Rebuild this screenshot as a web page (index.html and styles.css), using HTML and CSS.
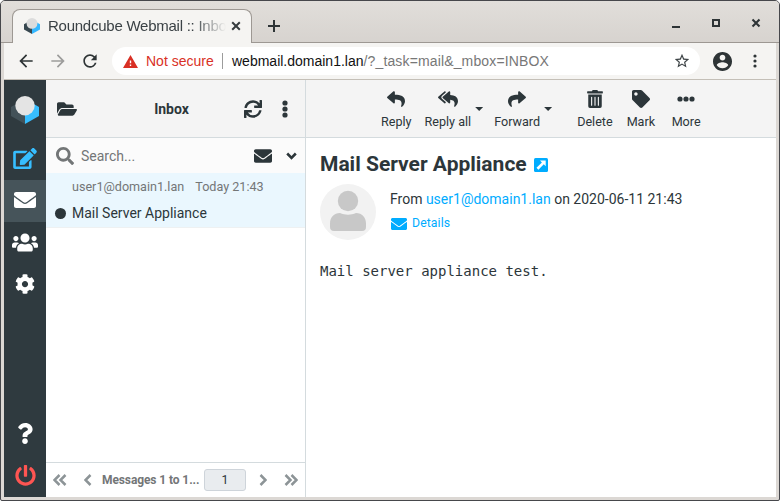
FILE: index.html
```html
<!DOCTYPE html>
<html lang="en">
<head>
<meta charset="utf-8">
<title>Roundcube Webmail :: Inbox</title>
<link rel="stylesheet" href="styles.css">
</head>
<body>
<div class="window">
  <header class="titlebar">
    <div class="tab">
      <svg class="favicon" viewBox="0 0 28 28"><path fill="#37474f" d="M0 11l6-3.500 8 4V28L0 20z"/><path fill="#34b7ff" d="M28 11l-6-3.500-8 4V28l14-8z"/><circle cx="14" cy="9.500" r="9.500" fill="#dcdcdc"/></svg>
      <span class="tab-title">Roundcube Webmail :: Inbo</span>
      <svg class="tab-close" viewBox="0 0 10 10"><path d="M1.200 1.200l7.600 7.600M8.800 1.200L1.200 8.800"/></svg>
    </div>
    <svg class="new-tab" viewBox="0 0 12 12"><path d="M6 0v12M0 6h12"/></svg>
    <div class="controls">
      <svg viewBox="0 0 10 10"><path d="M1 9h8" stroke-width="2"/></svg>
      <svg viewBox="0 0 10 10"><path d="M2 2h6v6H2z" stroke-width="2"/></svg>
      <svg viewBox="0 0 10 10"><path d="M1.500 1.500l7 7M8.500 1.500l-7 7" stroke-width="2.100"/></svg>
    </div>
  </header>

  <nav class="navbar">
    <svg class="nav-icon" viewBox="0 0 24 24"><path d="M20 11H7.830l5.590-5.590L12 4l-8 8 8 8 1.410-1.410L7.830 13H20v-2z"/></svg>
    <svg class="nav-icon disabled" viewBox="0 0 24 24"><path d="M4 11h12.170l-5.590-5.590L12 4l8 8-8 8-1.410-1.410L16.170 13H4v-2z"/></svg>
    <svg class="nav-icon" viewBox="0 0 24 24"><path d="M17.650 6.350A7.958 7.958 0 0 0 12 4c-4.420 0-7.990 3.580-7.990 8s3.570 8 7.990 8c3.730 0 6.840-2.550 7.730-6h-2.080A5.990 5.990 0 0 1 12 18c-3.310 0-6-2.690-6-6s2.690-6 6-6c1.660 0 3.140.69 4.220 1.780L13 11h7V4l-2.350 2.350z"/></svg>
    <div class="omnibox">
      <svg class="warning" viewBox="1 2 22 19"><path d="M1 21h22L12 2 1 21zm12-3h-2v-2h2v2zm0-4h-2v-4h2v4z"/></svg>
      <span class="insecure">Not secure</span>
      <span class="url">webmail.domain1.lan<span class="path">/?_task=mail&amp;_mbox=INBOX</span></span>
      <svg class="star" viewBox="1 1 22 22"><path d="M22 9.240l-7.190-.62L12 2 9.190 8.630 2 9.240l5.460 4.730L5.820 21 12 17.270 18.180 21l-1.630-7.030L22 9.240zM12 15.400l-3.760 2.270 1-4.280-3.320-2.880 4.380-.38L12 6.100l1.710 4.040 4.380.38-3.320 2.880 1 4.280L12 15.400z"/></svg>
    </div>
    <svg class="account" viewBox="2 2 20 20"><path d="M12 2C6.480 2 2 6.480 2 12s4.480 10 10 10 10-4.480 10-10S17.520 2 12 2zm0 3c1.660 0 3 1.340 3 3s-1.340 3-3 3-3-1.340-3-3 1.340-3 3-3zm0 14.200a7.200 7.200 0 0 1-6-3.220c.03-1.990 4-3.080 6-3.080 1.990 0 5.970 1.090 6 3.080a7.200 7.200 0 0 1-6 3.220z"/></svg>
    <svg class="menu" viewBox="0 0 4 14"><circle cx="2" cy="2" r="1.600"/><circle cx="2" cy="7" r="1.600"/><circle cx="2" cy="12" r="1.600"/></svg>
  </nav>

  <main class="app">
    <aside class="taskbar">
      <div class="task logo"><svg viewBox="0 0 28 28"><path fill="#435259" d="M0 11l6-3.500 8 4V28L0 20z"/><path fill="#37beff" d="M28 11l-6-3.500-8 4V28l14-8z"/><circle cx="14" cy="9.700" r="9.700" fill="#e4e4e4"/></svg></div>
      <div class="task compose"><svg viewBox="0 0 576 512"><path d="M402.600 83.200l90.200 90.200c3.800 3.800 3.800 10 0 13.800L274.400 405.600l-92.800 10.300c-12.400 1.400-22.900-9.100-21.500-21.500l10.300-92.800L388.800 83.200c3.800-3.800 10-3.800 13.800 0zm162-22.900l-48.800-48.800c-15.200-15.200-39.900-15.200-55.200 0l-35.400 35.400c-3.800 3.800-3.800 10 0 13.800l90.200 90.200c3.800 3.800 10 3.800 13.800 0l35.400-35.400c15.200-15.300 15.200-40 0-55.200zM384 346.200V448H64V128h229.800c3.200 0 6.200-1.300 8.500-3.500l40-40c7.600-7.600 2.200-20.500-8.500-20.500H48C21.500 64 0 85.500 0 112v352c0 26.500 21.500 48 48 48h352c26.500 0 48-21.500 48-48V306.200c0-10.700-12.900-16-20.500-8.500l-40 40c-2.200 2.300-3.500 5.300-3.500 8.500z"/></svg></div>
      <div class="task mail selected"><svg viewBox="0 64 512 384" preserveAspectRatio="none"><path d="M502.300 190.800c3.900-3.100 9.700-.2 9.700 4.700V400c0 26.500-21.500 48-48 48H48c-26.500 0-48-21.500-48-48V195.600c0-5 5.700-7.800 9.700-4.700 22.400 17.400 52.100 39.500 154.100 113.600 21.100 15.400 56.700 47.800 92.200 47.600 35.700.3 72-32.800 92.300-47.600 102-74.100 131.600-96.300 154-113.700zM256 320c23.200.4 56.600-29.200 73.400-41.400 132.700-96.300 142.800-104.700 173.400-128.700 5.800-4.500 9.200-11.500 9.200-18.900v-19c0-26.500-21.500-48-48-48H48c-26.500 0-48 21.500-48 48v19c0 7.400 3.400 14.300 9.200 18.900 30.600 23.900 40.700 32.400 173.400 128.700 16.800 12.200 50.200 41.800 73.400 41.400z"/></svg></div>
      <div class="task contacts"><svg viewBox="0 0 640 512"><path d="M96 224c35.300 0 64-28.700 64-64s-28.700-64-64-64-64 28.700-64 64 28.700 64 64 64zm448 0c35.300 0 64-28.700 64-64s-28.700-64-64-64-64 28.700-64 64 28.700 64 64 64zm32 32h-64c-17.600 0-33.500 7.100-45.100 18.600 40.300 22.100 68.900 62 75.100 109.400h66c17.700 0 32-14.300 32-32v-32c0-35.300-28.700-64-64-64zm-256 0c61.900 0 112-50.100 112-112S381.900 32 320 32 208 82.100 208 144s50.100 112 112 112zm76.800 32h-8.300c-20.800 10-43.900 16-68.500 16s-47.600-6-68.500-16h-8.300C179.600 288 128 339.600 128 403.200V432c0 26.500 21.500 48 48 48h288c26.500 0 48-21.500 48-48v-28.800c0-63.600-51.600-115.200-115.200-115.200zm-223.700-13.400C161.500 263.100 145.600 256 128 256H64c-35.300 0-64 28.700-64 64v32c0 17.700 14.300 32 32 32h65.900c6.300-47.400 34.900-87.300 75.200-109.400z"/></svg></div>
      <div class="task settings"><svg viewBox="0 0 512 512"><path d="M487.400 315.700l-42.600-24.600c4.300-23.200 4.300-47 0-70.200l42.600-24.600c4.900-2.800 7.100-8.600 5.500-14-11.100-35.600-30-67.800-54.700-94.600-3.800-4.100-10-5.100-14.800-2.300L380.800 110c-17.900-15.400-38.500-27.300-60.800-35.100V25.800c0-5.600-3.900-10.500-9.400-11.700-36.700-8.200-74.300-7.800-109.200 0-5.500 1.200-9.400 6.100-9.400 11.700V75c-22.200 7.900-42.800 19.800-60.800 35.100L88.700 85.500c-4.900-2.800-11-1.900-14.800 2.300-24.700 26.700-43.600 58.900-54.700 94.600-1.700 5.400.6 11.200 5.500 14L67.300 221c-4.300 23.200-4.300 47 0 70.200l-42.600 24.600c-4.900 2.800-7.100 8.600-5.500 14 11.100 35.600 30 67.800 54.700 94.600 3.800 4.100 10 5.100 14.800 2.300l42.600-24.600c17.900 15.400 38.500 27.300 60.800 35.100v49.200c0 5.600 3.900 10.500 9.400 11.700 36.700 8.200 74.300 7.800 109.200 0 5.500-1.200 9.400-6.100 9.400-11.700v-49.200c22.200-7.900 42.800-19.800 60.800-35.100l42.600 24.600c4.900 2.800 11 1.900 14.800-2.300 24.700-26.700 43.600-58.900 54.700-94.600 1.500-5.500-.7-11.300-5.600-14.100zM256 336c-44.100 0-80-35.900-80-80s35.900-80 80-80 80 35.900 80 80-35.900 80-80 80z"/></svg></div>
      <div class="task help"><svg viewBox="0 0 384 512"><path d="M202.021 0C122.202 0 70.503 32.703 29.914 91.026c-7.363 10.580-5.093 25.086 5.178 32.874l43.138 32.709c10.373 7.865 25.132 6.026 33.253-4.148 25.049-31.381 43.630-49.449 82.757-49.449 30.764 0 68.816 19.799 68.816 49.631 0 22.552-18.617 34.134-48.993 51.164-35.423 19.860-82.299 44.576-82.299 106.405V320c0 13.255 10.745 24 24 24h72.471c13.255 0 24-10.745 24-24v-5.773c0-42.860 125.268-44.645 125.268-160.627C377.504 66.256 286.902 0 202.021 0zM192 373.459c-38.196 0-69.271 31.075-69.271 69.271 0 38.195 31.075 69.270 69.271 69.270s69.271-31.075 69.271-69.271-31.075-69.270-69.271-69.270z"/></svg></div>
      <div class="task logout"><svg viewBox="0 0 512 512"><path d="M400 54.100c63 45 104 118.600 104 201.900 0 136.800-110.800 247.700-247.500 248C120 504.300 8.200 393 8 256.400 7.900 173.100 48.900 99.300 111.800 54.200c11.700-8.300 28-4.800 35 7.700L162.600 90c5.900 10.500 3.100 23.800-6.600 31-41.500 30.800-68 79.600-68 134.900-.1 92.300 74.500 168.100 168 168.100 91.600 0 168.600-74.200 168-169.100-.3-51.800-24.700-101.800-68.100-134-9.700-7.200-12.400-20.500-6.500-30.900l15.800-28.100c7-12.400 23.200-16.100 34.800-7.800zM296 264V24c0-13.300-10.700-24-24-24h-32c-13.300 0-24 10.700-24 24v240c0 13.300 10.700 24 24 24h32c13.300 0 24-10.700 24-24z"/></svg></div>
    </aside>

    <section class="list">
      <div class="list-header">
        <svg class="folder" viewBox="0 64 576 384"><path d="M572.694 292.093L500.270 416.248A63.997 63.997 0 0 1 444.989 448H45.025c-18.523 0-30.064-20.093-20.731-36.093l72.424-124.155A64 64 0 0 1 152 256h399.964c18.523 0 30.064 20.093 20.730 36.093zM152 224h328v-48c0-26.510-21.490-48-48-48H272l-64-64H48C21.490 64 0 85.490 0 112v278.046l69.077-118.418C86.214 242.250 117.989 224 152 224z"/></svg>
        <h2>Inbox</h2>
        <svg class="refresh" viewBox="0 0 512 512"><path d="M440.650 12.570l4 82.770A247.160 247.160 0 0 0 255.830 8C134.730 8 33.910 94.920 12.290 209.820A12 12 0 0 0 24.090 224h49.050a12 12 0 0 0 11.670-9.260 175.910 175.910 0 0 1 317-56.940l-101.460-4.860a12 12 0 0 0-12.570 12v47.410a12 12 0 0 0 12 12H500a12 12 0 0 0 12-12V12a12 12 0 0 0-12-12h-47.370a12 12 0 0 0-11.980 12.570zM255.830 432a175.610 175.610 0 0 1-146-77.800l101.800 4.870a12 12 0 0 0 12.570-12v-47.400a12 12 0 0 0-12-12H12a12 12 0 0 0-12 12V500a12 12 0 0 0 12 12h47.350a12 12 0 0 0 12-12.600l-4.150-82.570A247.170 247.170 0 0 0 255.830 504c121.110 0 221.930-86.920 243.550-201.820a12 12 0 0 0-11.800-14.180h-49.050a12 12 0 0 0-11.670 9.260A175.860 175.860 0 0 1 255.830 432z"/></svg>
        <svg class="dots" viewBox="0 0 6 18"><circle cx="3" cy="3" r="2.600"/><circle cx="3" cy="9" r="2.600"/><circle cx="3" cy="15" r="2.600"/></svg>
      </div>
      <div class="search">
        <svg class="lens" viewBox="0 0 512 512"><path d="M505 442.700L405.300 343c-4.500-4.500-10.600-7-17-7H372c27.600-35.300 44-79.700 44-128C416 93.100 322.900 0 208 0S0 93.100 0 208s93.100 208 208 208c48.300 0 92.700-16.400 128-44v16.300c0 6.400 2.500 12.500 7 17l99.700 99.700c9.400 9.400 24.600 9.400 33.900 0l28.300-28.300c9.400-9.400 9.400-24.600.1-34zM208 336c-70.700 0-128-57.200-128-128 0-70.700 57.200-128 128-128 70.700 0 128 57.200 128 128 0 70.700-57.200 128-128 128z"/></svg>
        <span class="placeholder">Search...</span>
        <svg class="unread-filter" viewBox="0 64 512 384"><path d="M502.300 190.800c3.900-3.100 9.700-.2 9.700 4.700V400c0 26.500-21.500 48-48 48H48c-26.500 0-48-21.500-48-48V195.600c0-5 5.700-7.800 9.700-4.700 22.400 17.400 52.100 39.500 154.100 113.600 21.100 15.400 56.700 47.800 92.200 47.600 35.700.3 72-32.800 92.300-47.600 102-74.100 131.600-96.300 154-113.700zM256 320c23.200.4 56.600-29.200 73.400-41.400 132.700-96.300 142.800-104.700 173.400-128.700 5.800-4.500 9.200-11.500 9.200-18.900v-19c0-26.500-21.500-48-48-48H48c-26.500 0-48 21.500-48 48v19c0 7.400 3.400 14.300 9.200 18.900 30.600 23.900 40.700 32.400 173.400 128.700 16.800 12.200 50.200 41.800 73.400 41.400z"/></svg>
        <svg class="chevron" viewBox="0 0 11 8"><path d="M1.200 1.500l4.300 4.300 4.300-4.300"/></svg>
      </div>
      <article class="message">
        <div class="meta"><span>user1@domain1.lan</span><span>Today 21:43</span></div>
        <div class="line"><i class="dot"></i><span>Mail Server Appliance</span></div>
      </article>
      <footer class="pager">
        <svg class="double" viewBox="0 0 14 12"><path d="M6.500 1L1.500 6l5 5M12.500 1l-5 5 5 5"/></svg>
        <svg class="single prev" viewBox="0 0 8 12"><path d="M6.500 1L1.500 6l5 5"/></svg>
        <span class="count">Messages 1 to 1...</span>
        <span class="page">1</span>
        <svg class="single next" viewBox="0 0 8 12"><path d="M1.500 1l5 5-5 5"/></svg>
        <svg class="double last" viewBox="0 0 14 12"><path d="M1.500 1l5 5-5 5M7.500 1l5 5-5 5"/></svg>
      </footer>
    </section>

    <section class="content">
      <div class="toolbar">
        <div class="tool reply"><svg viewBox="0 0 512 512"><path d="M8.309 189.836L184.313 37.851C199.719 24.546 224 35.347 224 56.015v80.053c160.629 1.839 288 34.032 288 186.258 0 61.441-39.581 122.309-83.333 154.132-13.653 9.931-33.111-2.533-28.077-18.631 45.344-145.012-21.507-183.510-176.590-185.742V360c0 20.700-24.300 31.453-39.687 18.164l-176.004-152c-11.071-9.562-11.086-26.753 0-36.328z"/></svg><span>Reply</span></div>
        <div class="tool reply-all"><svg viewBox="0 0 576 512"><path d="M136.309 189.836L312.313 37.851C327.720 24.546 352 35.348 352 56.015v82.763c129.182 10.231 224 52.212 224 183.548 0 61.441-39.582 122.309-83.333 154.132-13.653 9.931-33.111-2.533-28.077-18.631 38.512-123.162-3.922-169.482-112.590-182.015v84.175c0 20.701-24.300 31.453-39.687 18.164L136.309 226.164c-11.071-9.561-11.086-26.753 0-36.328zm-128 36.328L184.313 378.150C199.700 391.439 224 380.687 224 359.986v-15.818l-108.606-93.785A55.960 55.960 0 0 1 96 207.998a55.953 55.953 0 0 1 19.393-42.380L224 71.832V56.015c0-20.667-24.280-31.469-39.687-18.164L8.309 189.836c-11.086 9.575-11.071 26.767 0 36.328z"/></svg><span>Reply all</span></div>
        <i class="caret"></i>
        <div class="tool forward"><svg viewBox="0 0 512 512"><path transform="matrix(-1 0 0 1 512 0)" d="M8.309 189.836L184.313 37.851C199.719 24.546 224 35.347 224 56.015v80.053c160.629 1.839 288 34.032 288 186.258 0 61.441-39.581 122.309-83.333 154.132-13.653 9.931-33.111-2.533-28.077-18.631 45.344-145.012-21.507-183.510-176.590-185.742V360c0 20.700-24.300 31.453-39.687 18.164l-176.004-152c-11.071-9.562-11.086-26.753 0-36.328z"/></svg><span>Forward</span></div>
        <i class="caret"></i>
        <div class="tool delete"><svg viewBox="0 0 448 512"><path d="M32 464a48 48 0 0 0 48 48h288a48 48 0 0 0 48-48V128H32zm272-256a16 16 0 0 1 32 0v224a16 16 0 0 1-32 0zm-96 0a16 16 0 0 1 32 0v224a16 16 0 0 1-32 0zm-96 0a16 16 0 0 1 32 0v224a16 16 0 0 1-32 0zM432 32H312l-9.400-18.700A24 24 0 0 0 281.100 0H166.800a23.720 23.720 0 0 0-21.400 13.300L136 32H16A16 16 0 0 0 0 48v32a16 16 0 0 0 16 16h416a16 16 0 0 0 16-16V48a16 16 0 0 0-16-16z"/></svg><span>Delete</span></div>
        <div class="tool mark"><svg viewBox="0 0 512 512"><path d="M0 252.118V48C0 21.490 21.490 0 48 0h204.118a48 48 0 0 1 33.941 14.059l211.882 211.882c18.745 18.745 18.745 49.137 0 67.882L293.823 497.941c-18.745 18.745-49.137 18.745-67.882 0L14.059 286.059A48 48 0 0 1 0 252.118zM112 64c-26.510 0-48 21.490-48 48s21.490 48 48 48 48-21.490 48-48-21.490-48-48-48z"/></svg><span>Mark</span></div>
        <div class="tool more"><svg viewBox="0 0 18 18"><circle cx="3" cy="9" r="2.600"/><circle cx="9" cy="9" r="2.600"/><circle cx="15" cy="9" r="2.600"/></svg><span>More</span></div>
      </div>
      <div class="mail-view">
        <h1>Mail Server Appliance <svg viewBox="0 0 14 14"><rect width="14" height="14" rx="1.500" fill="#00acff"/><path fill="#fff" d="M6 2.500h5.700v5.700L9.800 6.300l-5.400 5.400-1.900-1.900 5.400-5.400z"/></svg></h1>
        <div class="sender">
          <svg class="avatar" viewBox="0 0 56 56"><circle cx="28" cy="28" r="28" fill="#f2f2f2"/><g fill="#c8c8c8"><circle cx="28" cy="17" r="10.200"/><path d="M20 29c5 2.200 11 2.200 16 0 6 0 10 4.500 10 10.500V43q0 4-4 4H14q-4 0-4-4v-3.500C10 33.500 14 29 20 29z"/></g></svg>
          <div>
            <p class="from">From <a>user1@domain1.lan</a> on 2020-06-11 21:43</p>
            <p class="details"><svg viewBox="0 64 512 384" preserveAspectRatio="none"><path d="M502.300 190.800c3.900-3.100 9.700-.2 9.700 4.700V400c0 26.500-21.500 48-48 48H48c-26.500 0-48-21.500-48-48V195.600c0-5 5.700-7.800 9.700-4.700 22.400 17.400 52.100 39.500 154.100 113.600 21.100 15.400 56.700 47.800 92.200 47.600 35.700.3 72-32.800 92.300-47.600 102-74.100 131.600-96.300 154-113.700zM256 320c23.200.4 56.600-29.200 73.400-41.400 132.700-96.300 142.800-104.700 173.400-128.700 5.800-4.500 9.200-11.500 9.200-18.900v-19c0-26.500-21.500-48-48-48H48c-26.500 0-48 21.500-48 48v19c0 7.400 3.400 14.300 9.200 18.900 30.600 23.900 40.700 32.400 173.400 128.700 16.800 12.200 50.200 41.800 73.400 41.400z"/></svg><span>Details</span></p>
          </div>
        </div>
        <pre class="body">Mail server appliance test.</pre>
      </div>
    </section>
  </main>
</div>
</body>
</html>
```

FILE: styles.css
```css
* { box-sizing: border-box; }
body { margin: 0; background: #fff; }
svg { display: block; flex: none; }
h1, h2, p, pre { margin: 0; }

.window {
  width: 780px;
  height: 501px;
  border: 1px solid #46474b;
  border-radius: 5px 5px 2px 2px;
  padding: 0 3px 3px;
  background: #dcd8d4;
  display: flex;
  flex-direction: column;
  overflow: hidden;
  font-family: "Liberation Sans", sans-serif;
}

.titlebar {
  height: 42px;
  flex: none;
  margin: 0 -3px;
  padding-left: 11px;
  background: linear-gradient(#e1deda, #d7d3cf);
  border-bottom: 1px solid #9d9893;
  display: flex;
  align-items: flex-end;
}
.tab {
  width: 240px;
  height: 34px;
  margin-bottom: -1px;
  border: 1px solid #9d9893;
  border-bottom: 0;
  border-radius: 8px 8px 0 0;
  background: #f5f4f2;
  display: flex;
  align-items: center;
  padding: 0 10px 2px 11px;
}
.favicon { width: 16px; height: 16px; }
.tab-title {
  width: 179px;
  margin-left: 8px;
  font-size: 15px;
  letter-spacing: -0.25px;
  color: #3a4145;
  white-space: nowrap;
  -webkit-mask-image: linear-gradient(90deg, #000 145px, transparent 178px);
  mask-image: linear-gradient(90deg, #000 145px, transparent 178px);
}
.tab-close { width: 10px; height: 10px; margin-left: 4px; stroke: #353b3e; stroke-width: 2; fill: none; }
.new-tab { width: 12px; height: 12px; margin: 0 0 10px 16px; stroke: #2e3436; stroke-width: 2; }
.controls { margin: 0 18px 14px auto; display: flex; gap: 30px; }
.controls svg { width: 10px; height: 10px; stroke: #2e3436; fill: none; }

.navbar {
  height: 37px;
  flex: none;
  border-bottom: 1px solid #c4bfb7;
  background: #f5f4f2;
  display: flex;
  align-items: center;
  padding: 0 16px 0 12px;
}
.nav-icon { width: 20px; height: 20px; margin-right: 12px; fill: #2e3436; }
.nav-icon.disabled { fill: #9d9d9c; }
.omnibox {
  width: 588px;
  height: 28px;
  border-radius: 14px;
  background: #fff;
  display: flex;
  align-items: center;
  padding: 0 10px 0 11px;
  font-size: 14px;
}
.warning { width: 15px; height: 13px; fill: #d93025; }
.insecure {
  width: 77px;
  margin-left: 8px;
  line-height: 16px;
  border-right: 1px solid #9c9c9c;
  color: #d93025;
  white-space: nowrap;
}
.url { margin-left: 9px; color: #111; }
.path { color: #777; letter-spacing: 0.14px; }
.star { width: 16px; height: 16px; margin-left: auto; fill: #3e4447; }
.account { width: 19px; height: 19px; margin-left: 13px; fill: #2e3436; }
.menu { width: 4px; height: 14px; margin-left: 20.5px; fill: #2e3436; }

.app {
  flex: 1;
  min-height: 0;
  display: flex;
  background: #fff;
  font-family: Roboto, sans-serif;
  font-size: 14px;
  color: #2c363a;
}

.taskbar { width: 42px; flex: none; background: #2f3a3f; display: flex; flex-direction: column; }
.task { height: 42px; flex: none; padding-bottom: 2px; display: flex; align-items: center; justify-content: center; fill: #fff; }
.task svg { width: 20px; height: 20px; }
.task.logo { height: 58px; padding: 2px 0 0; }
.task.logo svg { width: 28px; height: 28px; }
.task.compose { fill: #37beff; padding-bottom: 1px; }
.compose svg { width: 24px; height: 21px; }
.selected { background: #46545a; }
.mail svg { width: 22px; height: 16px; }
.contacts svg { width: 26px; height: 21px; }
.help { margin-top: auto; }
.help svg { width: 16px; height: 21px; }
.logout { fill: #ff5552; }
.logout svg { width: 21px; height: 21px; }

.list { width: 260px; flex: none; border-right: 1px solid #d4dbde; display: flex; flex-direction: column; }
.list-header {
  height: 58px;
  flex: none;
  padding: 0 17px 0 11px;
  background: #f4f4f4;
  border-bottom: 1px solid #d4dbde;
  display: flex;
  align-items: center;
}
.list-header svg { fill: #2c363a; }
.folder { width: 20px; height: 14px; }
.list-header h2 { flex: 1; padding-left: 22px; text-align: center; font-size: 14px; font-weight: 700; }
.refresh { width: 18px; height: 18px; }
.dots { width: 6px; height: 18px; margin-left: 20px; }

.search {
  height: 35px;
  flex: none;
  padding: 0 8px 0 10px;
  background: #fbfbfb;
  display: flex;
  align-items: center;
}
.lens { width: 18px; height: 18px; fill: #737677; }
.placeholder { flex: 1; margin-left: 7px; color: #737677; }
.unread-filter { width: 18px; height: 14px; fill: #2c363a; }
.chevron { width: 11px; height: 8px; margin-left: 14px; fill: none; stroke: #2c363a; stroke-width: 2.6; }

.message { height: 55px; flex: none; background: #eaf7fe; border-bottom: 1px solid #eef1f2; padding: 5px 0 0 9px; }
.meta { display: flex; gap: 11px; padding-left: 17px; font-size: 12.6px; line-height: 17px; color: #737677; }
.line { display: flex; align-items: center; gap: 6px; margin-top: 8px; line-height: 20px; }
.dot { width: 11px; height: 11px; border-radius: 50%; background: #2c363a; }

.pager {
  height: 35px;
  margin-top: auto;
  flex: none;
  border-top: 1px solid #d4dbde;
  display: flex;
  align-items: center;
  padding: 0 7px;
}
.pager svg { fill: none; stroke: #8d9497; stroke-width: 2.5; }
.double { width: 14px; height: 12px; }
.single { width: 8px; height: 12px; }
.prev { margin-left: 17px; }
.count { width: 98px; margin-left: 10px; font-size: 12px; font-weight: 700; letter-spacing: -0.1px; color: #737677; white-space: nowrap; }
.page {
  width: 42px;
  height: 22px;
  margin-left: 4px;
  border: 1px solid #ced4da;
  border-radius: 3px;
  background: #e9ecef;
  text-align: center;
  font-size: 12.25px;
  line-height: 20px;
}
.next { margin-left: 13px; }
.last { margin-left: 17px; }

.content { flex: 1; min-width: 0; }
.toolbar {
  height: 58px;
  background: #f4f4f4;
  border-bottom: 1px solid #d4dbde;
  display: flex;
  padding: 10px 0 0 75px;
  font-size: 12.6px;
}
.tool { display: flex; flex-direction: column; align-items: center; line-height: 18px; white-space: nowrap; }
.tool svg { width: 18px; height: 18px; margin-bottom: 5px; fill: #2c363a; }
.tool.reply-all svg { width: 20px; }
.reply-all { margin-left: 13px; }
.caret { margin: 17px 0 0 4px; width: 8px; height: 4px; background: #2c363a; clip-path: polygon(0 0, 100% 0, 50% 100%); }
.forward { margin-left: 11px; }
.delete { margin-left: 25px; }
.mark { margin-left: 14px; }
.more { margin-left: 16.5px; }

.mail-view { padding: 13px 14px; }
h1 { display: flex; align-items: center; gap: 7px; font-size: 21px; line-height: 27px; font-weight: 700; }
h1 svg { width: 14px; height: 14px; margin-top: 1px; }
.sender { display: flex; gap: 14px; margin-top: 6px; }
.avatar { width: 56px; height: 56px; }
.from { margin-top: 5px; line-height: 20px; }
.from a { color: #00acff; }
.details { display: flex; align-items: center; gap: 5px; margin-top: 4px; font-size: 12.25px; line-height: 20px; color: #00acff; }
.details svg { width: 16px; height: 12px; margin: 2px 0 0 1px; fill: #00acff; }
.details span { letter-spacing: 0.1px; }
.body { margin-top: 21px; font: 14px/20px "DejaVu Sans Mono", monospace; }
```
